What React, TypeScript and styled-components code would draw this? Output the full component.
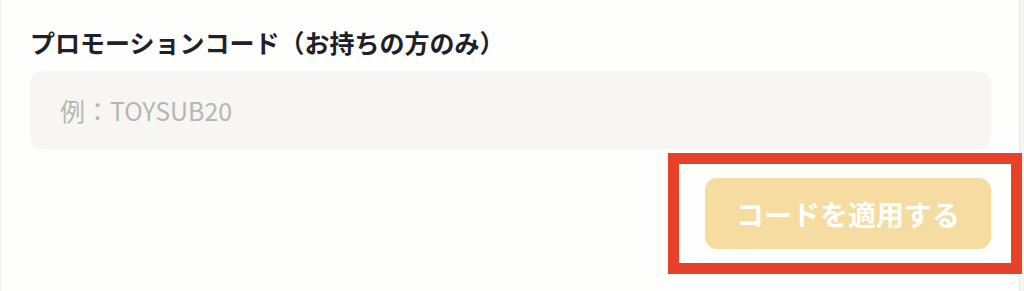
import React, { useState } from 'react';
import styled, { createGlobalStyle } from 'styled-components';

const GlobalStyle = createGlobalStyle`
  html, body {
    margin: 0;
    padding: 0;
    background-color: #f6f5f1;
  }
  body {
    font-family: 'Noto Sans CJK JP', 'Noto Sans', sans-serif;
  }
`;

const Panel = styled.div`
  height: 291px;
  margin-right: 4px;
  box-sizing: border-box;
  background-color: #fefefd;
  border-left: 1px solid #efede9;
  border-right: 1px solid #ebe9e4;
  padding: 24px 28px 0 29px;
  display: flex;
  flex-direction: column;
`;

const Label = styled.label`
  font-family: 'Noto Sans CJK JP', 'Noto Sans', sans-serif;
  font-size: 25px;
  line-height: 36px;
  font-weight: 700;
  color: #1e2127;
  margin-bottom: 11px;
`;

const CodeInput = styled.input`
  height: 78px;
  box-sizing: border-box;
  border: none;
  outline: none;
  border-radius: 12px;
  background-color: #f7f6f2;
  padding: 0 30px;
  font-family: 'Noto Sans CJK JP', 'Noto Sans', sans-serif;
  font-size: 25px;
  color: #333;

  &::placeholder {
    color: #b7b6b3;
  }
`;

const Actions = styled.div`
  display: flex;
  justify-content: flex-end;
  margin-top: 29px;
`;

// the red frame marks the button in the screenshot
const Highlight = styled.div`
  position: relative;

  &::after {
    content: '';
    position: absolute;
    left: -37px;
    top: -25px;
    right: -31px;
    bottom: -25px;
    border: 11px solid #e8412a;
    pointer-events: none;
  }
`;

const ApplyButton = styled.button<{ $active: boolean }>`
  width: 286px;
  height: 71px;
  border: none;
  border-radius: 12px;
  background-color: ${(p) => (p.$active ? '#efbe4f' : '#f6dca1')};
  color: #ffffff;
  font-family: 'Noto Sans CJK JP', 'Noto Sans', sans-serif;
  font-size: 28px;
  font-weight: 700;
  cursor: ${(p) => (p.$active ? 'pointer' : 'default')};
`;

const App: React.FC = () => {
  const [code, setCode] = useState<string>('');

  return (
    <>
      <GlobalStyle />
      <Panel>
        <Label htmlFor="promo">プロモーションコード（お持ちの方のみ）</Label>
        <CodeInput
          id="promo"
          type="text"
          value={code}
          onChange={(e) => setCode(e.target.value)}
          placeholder="例：TOYSUB20"
        />
        <Actions>
          <Highlight>
            <ApplyButton $active={code.trim() !== ''} disabled={code.trim() === ''}>
              コードを適用する
            </ApplyButton>
          </Highlight>
        </Actions>
      </Panel>
    </>
  );
};

export default App;
